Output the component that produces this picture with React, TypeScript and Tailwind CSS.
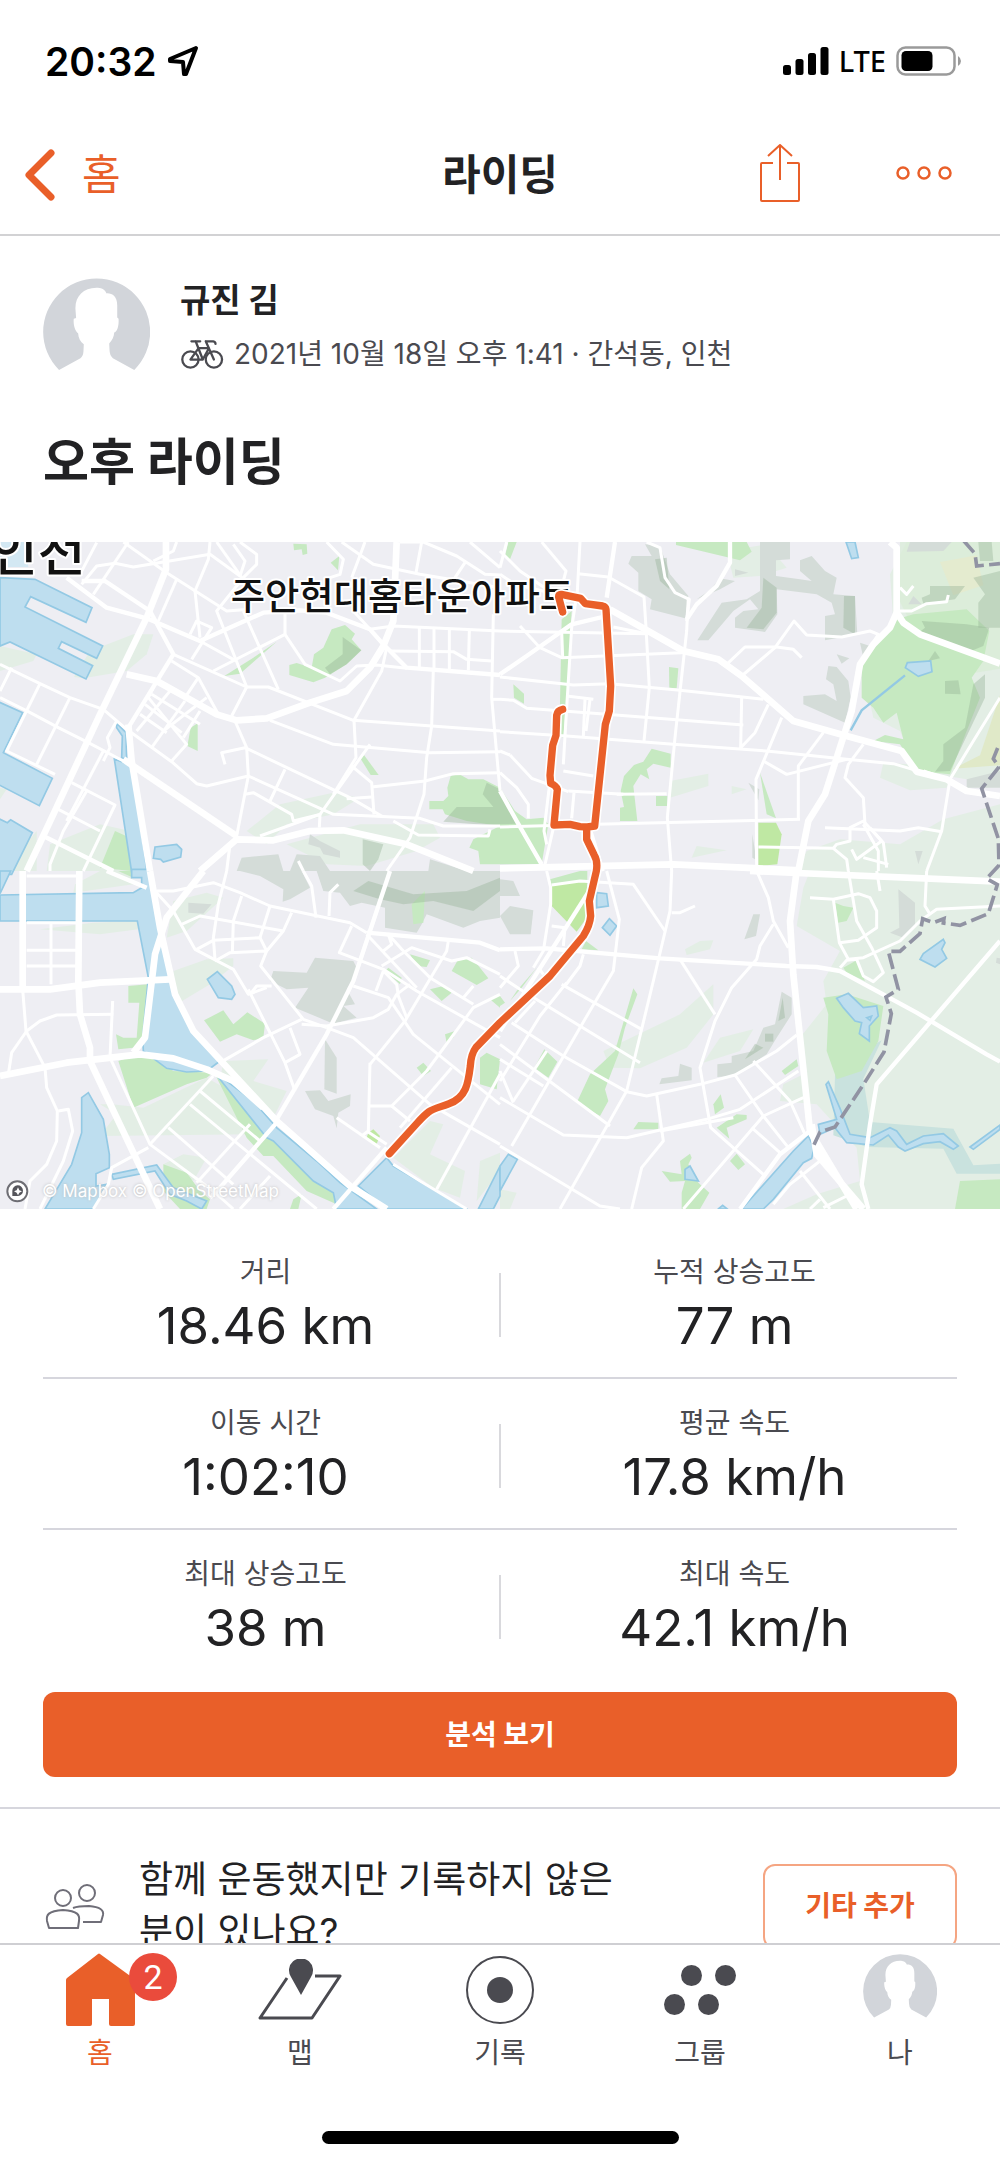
import type { ReactNode } from "react";

const FONT = "font-['Inter','Noto_Sans_CJK_KR',sans-serif]";

/* ---------- Map data: four tiles, each drawn in its own 1500 x 1020 space ---------- */

type Tile = {
  x: number;
  y: number;
  pale: string[];
  green: string[];
  lime?: string[];
  hill: string[];
  deep?: string[];
  water: string[];
  thin: string[];
  mid: string[];
  thick: string[];
};

const TILES: Tile[] = [
  {
    x: 0,
    y: -33,
    pale: [
      "M0 345L110 370 100 390 0 420Z",
      "M270 360L400 310 460 310 440 370 380 420 250 442 222 438Z",
      "M740 900L840 820 1000 785 1080 800 1000 850 860 880 800 940Z",
      "M860 940L1080 880 1300 880 1320 920 1250 960 1100 1005 980 1000Z",
      "M150 940L300 880 390 900 390 1020 140 1020Z",
      "M60 960L110 900 110 1020 40 1020Z",
      "M0 770L20 775 0 805Z",
    ],
    green: [
      "M880 38L920 40 922 68 908 72 905 55 882 58Z",
      "M992 95L1018 75 1014 118Z",
      "M970 350L995 295 1035 282 1065 308 1055 325 1084 358 1040 400 975 440 940 454 868 432 868 402 890 396 935 410 942 370Z",
      "M673 435L760 380 830 332 720 428Z",
      "M562 645L572 590 593 577 593 660Z",
      "M1080 680L1092 672 1136 732 1112 732Z",
      "M1342 770L1352 735 1378 730 1405 745 1450 745 1500 770V885L1400 870 1335 850 1328 835 1288 835V810L1330 810 1345 795Z",
      "M1420 925L1500 885V1000L1440 1000 1435 960 1408 950Z",
      "M300 1010L345 900 378 915 395 1020Z",
    ],
    hill: [
      "M725 980L835 970 850 1020 710 1020Z",
      "M890 970L960 975 990 1020 870 1020Z",
      "M930 910L960 930 1020 960 1020 980 970 970 960 950 925 940Z",
      "M1290 985L1400 1020H1285Z",
    ],
    deep: [
      "M1028 318L1084 358 1040 400 990 430 975 410 1028 370Z",
      "M1460 755L1500 775V885L1330 872 1370 828 1480 828 1448 790Z",
      "M1088 925L1150 940 1135 985 1110 1020 1088 1000Z",
    ],
    water: [
      "M0 140L105 145 276 230 258 274 92 197 75 228 308 345 290 382 185 332 175 352 278 404 258 444 30 333 0 345Z",
      "M-10 510L68 545 10 665 157 742 118 824-10 758Z",
      "M-10 860L22 875 32 866 97 905 35 1030H-10Z",
      "M350 577L378 605 380 685 365 680 367 615 350 590Z",
      "M343 684L398 705 442 1030 396 1030Z",
      "M465 948L530 940 545 955 542 978 490 993 482 985 460 982Z",
    ],
    thin: [
      "M0 400L120 458 210 500 310 535 380 595 515 692 590 758 620 765 745 735 1000 850 1260 862 1330 885 1500 885",
      "M0 500L85 542 175 590 265 635 370 690",
      "M35 410L0 480",
      "M120 458L20 660 165 730",
      "M210 500L110 700",
      "M215 755L345 822 250 1020",
      "M175 835L300 900",
      "M260 780L190 900 150 1000V1020",
      "M310 660L200 870",
      "M350 570L322 620 330 650 310 690",
      "M245 160L290 105 345 97 400 108 630 70 720 135 735 90 700 40",
      "M370 33L500 125 680 240 750 235",
      "M290 35L240 130",
      "M385 33L280 190",
      "M630 33L625 85 585 180 600 320",
      "M720 33L770 70 770 100 730 140 650 240 740 468 695 555",
      "M650 33L740 160",
      "M530 33L520 60 460 90",
      "M530 145L475 270",
      "M570 310L590 270 635 290 575 385",
      "M600 330L705 388",
      "M640 420L855 310V240",
      "M730 240L835 475",
      "M520 370L740 468 805 468 1060 568 1500 600",
      "M855 310L915 400 1020 450 1070 405 1130 402 1220 412",
      "M515 390L595 440 655 550",
      "M470 450L445 500 560 640 515 690",
      "M455 490L600 580",
      "M435 520L545 605",
      "M420 550L500 605",
      "M510 480L410 600",
      "M555 510L455 650",
      "M600 540L550 620",
      "M620 500L490 600",
      "M595 440L555 500",
      "M705 570L740 650 745 735 710 915",
      "M675 700L665 665 735 650 1050 800 1150 858",
      "M810 568L1000 640 1290 665 1500 662",
      "M855 715L810 810",
      "M735 790L760 785 875 850 880 870 960 850 1110 640",
      "M780 915L960 850 958 890",
      "M1160 350L1145 420 1062 568 1068 680 1000 790",
      "M1055 705L1115 755 1122 850",
      "M1115 768L1275 750 1360 728 1500 725",
      "M1040 803L1115 798",
      "M1300 415L1295 585 1280 680 1272 790 1230 920 1160 1020",
      "M1110 295L1180 285 1500 300",
      "M1258 290V415",
      "M1302 292V415",
      "M1348 292V415",
      "M1408 298L1405 418",
      "M1170 360L1360 362 1400 385 1475 390",
      "M980 33L1030 85 1020 130 990 140",
      "M1025 33L1120 100 1260 130 1500 170",
      "M1095 33L1055 140",
      "M1060 240L1110 295",
      "M1265 33L1248 125",
      "M1200 33L1270 33 1370 75 1455 130 1500 132",
      "M1395 95L1365 140",
      "M1410 33L1500 110",
      "M1480 250L1475 500 1500 780",
      "M1475 505H1500",
      "M1180 870L1255 912 1465 915 1470 895",
      "M690 940L680 1020",
      "M895 990L910 1020",
    ],
    mid: [
      "M200 140L320 230 440 262 600 330 790 245 900 238 980 245 1110 295 1150 340 1220 410 1500 432",
      "M245 150H315L450 240 520 370 385 590",
      "M130 915L340 1020",
    ],
    thick: [
      "M498 33V115L440 260 300 550 160 850 80 1020",
      "M380 430L470 450 650 550 710 568 800 562 930 515 1040 480 1110 410 1150 345 1180 270 1190 33",
      "M370 685L710 915",
      "M385 580L395 690 450 1020",
      "M600 1020L710 925 820 928 930 900 1030 898 1220 940 1420 1020",
    ],
  },
  {
    x: 1500,
    y: -33,
    pale: [
      "M510 750L625 728V765L510 800Z",
      "M695 765L740 775 695 790Z",
      "M1220 33H1500V740L1400 745 1250 720 1200 600 1120 560 1090 420 1180 270 1170 130Z",
      "M1150 695L1230 700 1350 750 1340 770 1230 778 1140 740Z",
      "M920 960L1020 925 1200 940 1330 865 1500 820V1020H890Z",
      "M590 945L680 958 575 980Z",
      "M680 60L800 40 860 110 780 135 700 140Z",
    ],
    green: [
      "M25 33H50L30 85 15 75Z",
      "M528 33H740L755 62 720 88 528 42Z",
      "M185 265L215 240 205 440 190 620 178 615Z",
      "M40 460L72 488V518L42 500Z",
      "M507 408L535 412 530 472 508 470Z",
      "M455 653L512 668V710L460 698 440 715 448 745 422 730 400 765 412 870H360V830L372 828 362 780 372 735 402 702 430 692Z",
      "M468 795H502V825H468Z",
      "M0 770L45 840 80 865 130 860 145 880 125 1000H0Z",
      "M1190 265L1240 250 1400 235 1468 300 1450 390 1415 440 1440 500 1400 600 1350 730 1250 720 1200 640 1120 630 1155 612 1210 625 1190 545 1150 575 1120 530 1085 500 1085 400Z",
      "M780 725L828 862 800 850Z",
    ],
    lime: ["M775 875L828 875 845 910 832 1000 775 1005Z"],
    hill: [
      "M435 40L480 45 510 130 565 195 555 262 450 235 455 205 415 180 415 125 385 98 395 75 455 75Z",
      "M780 33H870V85L828 88V135L900 145 935 150 900 120V88L935 75 975 120 1010 140 1000 190 1065 195 1072 310 975 328V255L1005 250 995 215 950 190 830 175 832 250 795 303 705 290 705 260 730 240 775 235 750 205 700 240 625 328H592L665 215 740 205 780 180Z",
      "M985 405L1010 408 1045 450 1052 500 1035 575 910 520 910 495 975 490 1010 510 1000 460 978 445Z",
      "M630 178L660 142 705 150 660 175 590 205Z",
      "M705 115L745 125 705 135Z",
      "M1230 33H1355L1330 60 1220 62Z",
      "M1010 370L1048 382 1025 398Z",
      "M745 755L778 775 775 808Z",
      "M1245 960H1268L1255 1000Z",
      "M1225 220L1240 195 1265 220Z",
      "M1080 335L1110 345 1090 380Z",
      "M757 910L765 960V985L757 980Z",
      "M1400 745L1500 720V770H1400Z",
    ],
    deep: [
      "M0 780L52 870V878L0 880Z",
      "M1290 165H1395L1365 205 1270 218 1265 200 1290 190Z",
      "M1420 140L1500 120V290H1435V215L1455 190Z",
      "M1265 270L1400 280 1468 290 1450 345 1400 365 1250 310 1275 290Z",
      "M1335 450L1375 448 1382 490 1335 488Z",
      "M1420 460L1455 430 1455 500 1350 720 1305 722 1330 690V640L1395 590Z",
      "M1435 33H1475L1480 90H1440Z",
      "M790 140L830 170V245L790 295 740 290 785 230Z",
      "M465 85L500 80 508 175 480 150Z",
      "M1032 195H1065V310L1030 290Z",
      "M1285 390L1305 360 1320 382Z",
    ],
    water: [
      "M1222 395L1292 390 1296 422 1255 436 1216 410Z",
      "M1038 33H1065L1075 80 1055 83Z",
    ],
    thin: [
      "M125 33L198 120 190 150",
      "M240 33L232 180 215 290 200 530 190 700",
      "M235 128L325 138 432 198 438 290 448 470 432 630",
      "M0 60L60 120 170 195",
      "M0 130L45 160 150 185",
      "M20 33L0 110",
      "M60 285L120 350 185 380 545 365",
      "M0 300L440 308",
      "M0 438L220 462 330 458 540 478 790 505",
      "M185 300L188 380",
      "M340 288L440 308",
      "M200 495L280 505",
      "M255 505L250 615",
      "M270 505L258 600",
      "M0 505L40 508 80 532 300 548 730 582",
      "M0 602L200 615 520 640 800 660 1040 685 1180 698 1260 722",
      "M725 500L722 650 765 605 805 520",
      "M845 560L768 745 770 1010",
      "M970 605L895 705V862",
      "M790 690L860 730 1000 695 1040 685",
      "M1090 640L1045 700 1035 740 1090 800 1095 880",
      "M565 200L560 300 525 620 502 860 515 1020",
      "M440 33L480 50 495 140 525 185 568 205 560 270",
      "M680 400L735 348 830 348 880 355 905 380",
      "M725 435L825 350 882 270 920 312 1025 318 1110 300 1135 310 1110 350",
      "M1200 240L1235 240 1280 218 1340 212 1345 192",
      "M1200 170L1220 190 1240 165",
      "M0 888L290 880 900 865",
      "M350 790L500 788",
      "M205 780L370 790",
      "M190 720L280 735",
      "M222 785L215 862",
      "M30 672L95 742 205 782",
      "M0 660L30 672",
      "M0 725L50 770 85 820V862",
      "M165 870L135 1000",
      "M150 750L132 900 140 940",
      "M975 890L1200 900 1255 890 1325 902",
      "M775 948L1000 952 1010 940 1050 930V890L1090 870 1145 930 1070 985 1055 955",
      "M1000 952L1040 985 1045 1020",
      "M1090 880L1135 960V1020",
      "M1110 890L1150 935 1160 1010",
      "M1350 745L1325 900 1280 1020",
      "M1500 500L1420 630 1350 745",
      "M1090 980L1165 1000",
      "M270 890L310 1020",
    ],
    mid: [
      "M0 430L80 375 215 280 320 255",
      "M0 780L50 870 125 1000",
      "M690 33V95L650 165 590 220 560 265",
      "M345 33L320 200",
      "M1270 722L1345 748",
    ],
    thick: [
      "M330 235L550 360 655 385 725 435 880 570 1040 615 1205 660 1250 722 1340 745 1400 780 1500 795",
      "M1170 33L1190 50V245L1210 275 1260 310 1500 398",
      "M1190 245L1170 290 1120 340 1080 400 1055 540 975 790 925 870 895 1020",
      "M0 1012L520 1000 900 1018",
    ],
  },
  {
    x: 0,
    y: 987,
    pale: [
      "M225 40L300 0H390L400 40 220 65Z",
      "M120 175L280 155 410 150 415 175 300 190Z",
      "M520 300L620 265 700 262 700 285 630 340 530 400Z",
      "M520 90L620 65 670 80 560 180 500 200Z",
      "M335 700L430 710 620 620 760 700 760 790 300 795 350 730 300 700Z",
      "M670 570L805 565 760 630 860 660 820 740 660 630Z",
      "M1180 860L1290 750 1330 760 1290 850 1395 900 1380 980 1300 950Z",
      "M1440 870L1500 845V900L1430 990Z",
      "M490 880L550 850 620 860 580 930Z",
    ],
    green: [
      "M385 345L445 340 430 500 400 530 355 535 348 490 370 500 410 500 418 395H385Z",
      "M355 570L400 555 460 560 520 600 640 605 620 620 560 640 400 710Z",
      "M612 448L670 418 700 460 742 424 795 458 790 500 760 508 710 490 660 512Z",
      "M645 610L720 680 805 790 900 860 960 930 1020 965 1010 1000 920 960 820 855 790 855 740 800Z",
      "M490 880L560 905 600 960 630 985 620 1014 540 1014 490 960Z",
      "M1355 300L1375 265 1415 260 1440 290 1465 322 1430 342Z",
      "M1230 250L1290 268 1280 288 1250 285Z",
      "M1290 355L1330 345 1355 365 1325 390Z",
      "M1155 300L1165 290 1205 320 1200 340Z",
      "M1335 490L1365 480 1360 500 1340 515Z",
      "M1250 590L1270 575 1293 600 1270 615Z",
      "M1440 560L1460 545 1500 565 1490 655 1440 640Z",
      "M1470 385L1500 370V410Z",
      "M1235 100L1275 60 1270 155 1240 160Z",
      "M355 0H400V20Z",
      "M880 985L905 970 895 1014H870Z",
    ],
    lime: ["M1105 785L1120 775 1140 795 1130 818 1100 800Z"],
    hill: [
      "M720 0H905L930 50 870 85 848 92 850 55 780 15Z",
      "M950 0H1500V140L1440 150 1390 170 1280 130 1265 160 1250 185 1155 170 1155 110 1085 95 1050 105 1020 65 970 60Z",
      "M945 260L1060 270 1075 300 1040 355 1065 400 1030 405 1070 440 1000 458 885 410 925 350 860 355 810 330 820 300 920 305Z",
      "M975 505L1010 560V668L973 655Z",
      "M915 660L960 658 985 690 1052 670 1050 705 1015 725 1010 772 1000 735 945 715Z",
      "M565 95L635 100 610 128 565 125Z",
    ],
    deep: ["M1060 60L1105 30 1240 70 1400 60 1500 20V60L1420 120 1300 90 1210 100 1140 85Z"],
    water: [
      "M0 0H32L0 68Z",
      "M0 72L400 65 425 50V20H395V-5H445L480 180 510 330 540 395 590 490 660 570 620 600 560 603 500 592 430 540 428 500 445 320 412 150H0Z",
      "M652 302L695 345 705 370 695 385 655 380 622 325Z",
      "M245 680L265 665 310 745 328 850V890L288 908V945L320 940 280 1014H135L215 880 245 785Z",
      "M335 910L470 882 520 950 620 990 605 1014 560 990 510 970 465 900 340 925Z",
      "M640 600L760 690 830 770 950 870 1020 935 1130 1014H1010L1000 965 940 930 820 810 800 800Z",
      "M1075 945L1160 860 1180 885 1400 1014H1160Z",
      "M1500 885L1435 1014H1480L1500 975Z",
    ],
    thin: [
      "M80 15H235",
      "M80 155H235",
      "M80 238H235",
      "M80 285H235",
      "M153 155V340",
      "M68 355L78 480 135 590 140 650 172 720 170 810 140 880 90 930 75 1014",
      "M25 610L35 545 80 480 120 450 170 432 340 430",
      "M338 390L330 560",
      "M175 720L205 715 218 780 190 870 120 1014",
      "M330 560L450 820 640 960 700 1014",
      "M445 830L335 890 325 940 280 1014",
      "M470 60L520 60 640 35 720 65 810 105 1050 155 1100 185",
      "M465 60L520 120 585 235 700 295 745 370 800 350",
      "M545 160L600 135 850 180",
      "M680 0L655 100 640 200 645 265",
      "M725 75L700 150 697 245",
      "M590 235L640 208 780 200 800 240 850 180 875 125",
      "M810 105L780 200",
      "M645 270L690 245 800 240 782 285 910 445 980 470",
      "M750 370L770 345 815 345",
      "M745 355L855 575 885 660",
      "M660 575L790 500 905 445",
      "M870 470L900 550 855 575",
      "M905 460L980 465 1120 440 1165 415 1190 370 1230 340",
      "M910 0L935 45 948 140",
      "M1015 40L990 65 987 135",
      "M1055 165L1018 245 1150 295 1250 360 1500 500",
      "M1100 190L1250 350",
      "M1060 345L1165 380 1240 490 1500 700",
      "M980 470L1060 500 1290 700 1500 820",
      "M1110 575L1105 780 1085 795",
      "M1010 740L1140 830",
      "M1150 300L1128 360",
      "M1145 285L1235 230 1355 270 1400 260 1500 310",
      "M1150 240L1175 220 1165 190 1210 240 1290 320 1420 400",
      "M1345 210L1340 240 1215 450 1110 580",
      "M1150 300L1190 340 1195 375 1220 440",
      "M1500 370L1420 410 1280 600 1175 705 1110 705",
      "M1420 345L1390 380",
      "M1175 705L1230 750",
      "M1355 590L1200 770",
      "M1500 610L1310 955",
      "M1180 880L1260 930 1400 1014",
      "M640 615L450 820",
      "M600 660L780 810",
      "M570 700L950 1014",
      "M505 770L700 940",
      "M750 760L590 935",
      "M810 915L720 1014",
      "M1100 780L1160 820",
    ],
    mid: [
      "M1170 0L1060 330 980 490 830 745",
      "M830 755L660 950 630 980",
      "M1160 830L1000 1014",
      "M320 0L440 50",
      "M1100 185L1440 215 1500 238",
    ],
    thick: [
      "M68 0V350",
      "M238 0L235 330 240 430 270 530 270 570 350 740 480 1014",
      "M0 355H150L300 335 510 325",
      "M450 0L480 170 525 370 580 480 830 750 1050 945 1160 1014",
      "M610 0L500 140 465 250 435 500 400 545",
      "M0 615L200 575 420 550 520 562 620 595 700 630 790 710",
    ],
  },
  {
    x: 1500,
    y: 987,
    pale: [
      "M930 0H1500V1014H850L950 970 1080 930 1070 830 950 700 840 690 850 640 910 610 900 500 980 400 970 330 1020 240 890 165 910 50Z",
      "M310 540L540 430 640 340V430L560 530 420 592 330 590Z",
      "M610 575L660 500 760 475 720 540Z",
      "M555 235L600 210 640 208 630 235 560 252Z",
      "M0 955L50 965 30 1014H0Z",
    ],
    green: [
      "M150 25L240 0H262V40L155 45Z",
      "M400 352L412 370 375 470 355 550 315 655 325 690 300 735 230 695 270 610 345 540Z",
      "M103 590L133 535 172 572 145 620Z",
      "M0 375L15 395 0 405Z",
      "M110 290L65 350 30 390 50 360Z",
      "M970 380L1040 370 1150 405 1135 510 1085 600 1010 625 980 540 985 430Z",
      "M1005 95L1030 105 1060 110 1040 150 1015 155Z",
      "M1030 290L1070 268 1095 330 1040 305Z",
      "M845 600L890 565 895 585 855 612Z",
      "M640 700L662 670 672 710 645 730Z",
      "M650 770L710 730 740 732V745L680 770 688 803Z",
      "M415 753L475 755V775H400Z",
      "M690 870L710 848 735 880 715 897Z",
      "M570 848L575 860 565 880 595 935 628 965 600 1014H545V965L555 930 510 932 485 900 545 910 540 870Z",
      "M1380 930L1500 925V1014H1365Z",
      "M258 210L295 238 245 235Z",
    ],
    lime: ["M155 40L260 30 268 130 230 182 155 105Z"],
    hill: [
      "M0 25L40 30 60 75 0 75Z",
      "M0 135L30 105 100 118 92 190 30 190Z",
      "M760 130H780L768 195 733 205Z",
      "M845 362L875 380V430L830 500 800 550 700 615 652 618V580L695 575V555L760 540 790 470 825 460Z",
      "M540 578L575 590V628L478 640 485 622 535 615Z",
      "M1195 55L1245 95V165L1210 200 1170 185 1198 170Z",
      "M1490 260L1500 262V280L1488 275Z",
    ],
    deep: [
      "M848 380L855 440 835 450Z",
      "M795 488H820V512H795Z",
      "M765 518L790 530 735 565Z",
    ],
    water: [
      "M290 65L320 68 325 105 290 110Z",
      "M328 143L350 165 330 193 307 170Z",
      "M1330 205L1335 215 1325 235 1340 262 1305 288 1260 265 1270 248Z",
      "M1010 382L1045 367 1090 410 1130 405 1135 435 1108 465V510L1078 488 1085 455 1065 450 1030 410Z",
      "M1100 440L1115 435 1110 448Z",
      "M925 795L942 830 935 862 910 875 820 985 790 1014H725L880 840Z",
      "M570 885L595 930 555 925 555 895Z",
      "M25 850L52 865 0 960V885Z",
      "M655 1014L668 1003 682 1014Z",
      "M985 632L1020 712 1050 790 1110 800 1170 770 1190 780 1220 820 1270 795 1330 788 1375 825 1360 835 1320 812 1270 818 1215 840 1195 828 1165 792 1120 822 1040 815 1005 770 960 790 955 760 1010 745 978 640Z",
      "M1410 828L1500 762V775L1420 835Z",
    ],
    thin: [
      "M0 315L60 355 420 575",
      "M0 520L330 765",
      "M0 680L190 792 380 800 620 745 720 715 895 600",
      "M0 825L300 1005 360 1014",
      "M35 455L190 555 380 662 440 675 600 640 705 612 830 540 890 492",
      "M0 565L130 645",
      "M115 290L130 310",
      "M185 340L425 475",
      "M200 335L120 435 0 630",
      "M105 390L45 455",
      "M250 250L240 285 195 345",
      "M45 240L55 285 0 350",
      "M140 0L152 50V100L130 240 100 290",
      "M155 42L240 30 400 40 495 180",
      "M320 0L358 145 340 300 240 470 35 825",
      "M515 0L510 120 460 330 380 660 180 1014",
      "M515 125L540 125 585 105",
      "M155 165L195 170 190 225",
      "M770 0L805 80 820 150 865 230",
      "M820 160L780 225 770 265 695 350 645 450 600 590 632 770 790 910",
      "M540 265L645 430",
      "M470 670L490 810 425 890 395 1014",
      "M705 612L790 735 865 830",
      "M760 570L870 690 915 790",
      "M910 680L790 735 550 1014",
      "M755 770L840 845",
      "M480 780L700 740",
      "M930 80L1000 85 1075 68 1110 80 1130 120 1130 170 1075 208 1020 215",
      "M1000 85L1018 215 1045 265 1090 260 1200 210 1260 150 1310 115 1500 105",
      "M1045 0L1070 150 1115 230 1150 305 1120 332 1090 315 1070 265 1040 268 1020 290",
      "M1280 0L1275 105 1290 130",
      "M1130 0L1140 60",
      "M900 900L990 1014",
      "M820 1000L870 940 960 870",
      "M960 985L930 1014",
      "M970 1010L1040 975",
      "M0 600L40 695",
      "M140 540L40 690",
    ],
    mid: [
      "M0 235L140 232 480 262 860 285 950 288 1020 300 1250 425 1460 550 1500 572",
      "M1500 210L1130 640 1110 760 1085 940 1105 1014",
      "M930 780L840 850 720 1014",
      "M280 40L0 480",
    ],
    thick: [
      "M750 0L1500 32",
      "M890 0L870 150 880 310 930 780 1070 1014",
      "M935 760L950 850 1090 1014",
    ],
  },
];

const BORDER =
  "M2890-5L2925 35 2930 72 3000 65 M2993 618L2980 650 2997 675 2945 740 2995 890 2997 970 2960 1010 2992 1028 2965 1115 2880 1150 2830 1143 2832 1130 2800 1142 2768 1130 2760 1175 2700 1228 2665 1228 2695 1342 2658 1365 2674 1415 2652 1530 2590 1628 2505 1755 2460 1770 2442 1808";

const ROUTE =
  "M1688 210L1676 165Q1675 156 1684 157L1742 169 1756 185 1808 192Q1817 194 1818 202L1832 432 1828 507 1816 547 1784 852 1762 855 1740 854 1710 847 1662 849 1672 742Q1668 730 1652 724L1650 700 1658 610 1668 580 1670 520Q1672 505 1688 502M1760 855V892L1782 938Q1794 958 1789 987L1768 1077 1772 1122Q1770 1150 1750 1182L1650 1302 1500 1442 1428 1516Q1413 1536 1411 1572C1405 1620 1400 1668 1345 1686C1290 1706 1290 1700 1250 1745L1168 1835";

function Layer({ pick, children }: { pick: (t: Tile) => string[] | undefined; children: (d: string) => ReactNode }) {
  return (
    <>
      {TILES.map((t) => (
        <g key={`${t.x}:${t.y}`} transform={`translate(${t.x} ${t.y})`}>
          {(pick(t) ?? []).map((d) => children(d))}
        </g>
      ))}
    </>
  );
}

function RideMap() {
  return (
    <div className="relative">
      <svg viewBox="0 0 3000 2001" className="block h-auto w-full bg-[#eeeef3]" role="img" aria-label="라이딩 경로 지도">
        <Layer pick={(t) => t.pale}>{(d) => <path key={d} d={d} fill="#e3eee5" />}</Layer>
        <path d="M2700 0H3000V380L2880 400 2760 300 2700 180Z" fill="#d9edd6" opacity="0.7" />
        <path d="M2820 60L2930 40 2950 130 2860 160Z" fill="#e4ebcf" />
        <path d="M3000 460L2940 640 2860 680 3000 670Z" fill="#e0e9c8" />
        <path d="M2505 1600L2600 1520 2645 1495 2590 1610 2610 1740 2860 1760 2920 1870 3000 1865V1895L2870 1895 2830 1820 2600 1815 2500 1780Z" fill="#c9e2de" />
        <Layer pick={(t) => t.hill}>{(d) => <path key={d} d={d} fill="#d4dcd8" />}</Layer>
        <Layer pick={(t) => t.green}>{(d) => <path key={d} d={d} fill="#c6e9c1" />}</Layer>
        <Layer pick={(t) => t.lime}>{(d) => <path key={d} d={d} fill="#bfe8a3" />}</Layer>
        <Layer pick={(t) => t.deep}>{(d) => <path key={d} d={d} fill="#94b094" opacity="0.38" />}</Layer>
        <path d="M0 0H75L85 75H0Z" fill="#d3e8f3" />
        <Layer pick={(t) => t.water}>
          {(d) => <path key={d} d={d} fill="#bedeef" stroke="#93c9e4" strokeWidth="5" />}
        </Layer>
        <path d="M2715 400L2585 505 2552 565" fill="none" stroke="#93c9e4" strokeWidth="7" />
        <g fill="none" stroke="#fff" strokeLinejoin="round">
          <g strokeWidth="9">
            <Layer pick={(t) => t.thin}>{(d) => <path key={d} d={d} />}</Layer>
          </g>
          <g strokeWidth="13">
            <Layer pick={(t) => t.mid}>{(d) => <path key={d} d={d} />}</Layer>
          </g>
          <g strokeWidth="20">
            <Layer pick={(t) => t.thick}>{(d) => <path key={d} d={d} />}</Layer>
          </g>
        </g>
        <path d={BORDER} fill="none" stroke="#9193a3" strokeWidth="11" strokeDasharray="48 16" />
        <g className={FONT} fill="#111" stroke="#fff" strokeWidth="12" strokeLinejoin="round" paintOrder="stroke">
          <text x="-30" y="86" fontSize="156" fontWeight="500">
            인천
          </text>
          <text x="692" y="204" fontSize="112" fontWeight="500">
            주안현대홈타운아파트
          </text>
        </g>
        <path d={ROUTE} fill="none" stroke="#fff" strokeWidth="32" strokeLinecap="round" strokeLinejoin="round" />
        <path d={ROUTE} fill="none" stroke="#e95f29" strokeWidth="22" strokeLinecap="round" strokeLinejoin="round" />
        <g transform="translate(52 1948)">
          <circle r="30" fill="#fff" stroke="#6e6e74" strokeWidth="6" />
          <path d="M-15 14V-2A16 16 0 1 1 2 14Z" fill="#55555b" />
          <path d="M2-12L6-3 14 0 6 4 2 12-2 4-10 0-2-3Z" fill="#fff" />
        </g>
      </svg>
      <p className="absolute bottom-1 left-[42px] text-[17px] leading-7 text-white [text-shadow:0_0_3px_#bbb]">
        © Mapbox © OpenStreetMap
      </p>
    </div>
  );
}

/* ---------- Icons ---------- */

function Avatar({ className }: { className: string }) {
  return (
    <svg viewBox="128 770 320 276" className={className} fill="#d2d5da" aria-hidden="true">
      <path d="M176 1045A160 160 0 1 1 401 1045L337 1010Q327 1000 327 985L326 966C336 955 340 945 341 933C352 928 355 910 354 892L350 888V852C350 825 335 815 318 816C312 802 300 799 288 799C248 799 224 825 225 862L227 890L220 892C218 910 224 928 233 935C234 950 240 960 250 968L249 990Q248 1004 240 1010Z" />
    </svg>
  );
}

function BikeIcon() {
  return (
    <svg viewBox="540 962 135 94" className="h-8 w-11" fill="none" stroke="#4a4a50" strokeWidth="7" strokeLinecap="round" strokeLinejoin="round" aria-hidden="true">
      <circle cx="572" cy="1026" r="25" />
      <circle cx="644" cy="1026" r="25" />
      <path d="M575 970H602M588 970L610 1026H572L597 991H629L610 1026M619 970L644 1026M619 970H642Q649 971 649 978" />
    </svg>
  );
}

function PeopleIcon() {
  return (
    <svg viewBox="0 0 60 48" className="h-12 w-15" fill="none" stroke="#6f6e78" strokeWidth="2" strokeLinejoin="round" aria-hidden="true">
      <circle cx="18" cy="16" r="8" />
      <circle cx="42" cy="11" r="8" />
      <path d="M4 46L2 39C1 33 3 29 18 28C33 29 35 33 34 39L33 46ZM28 26C33 24 38 24 44 24C55 25 59 28 58 33L56 40H38" />
    </svg>
  );
}

function ShareIcon() {
  return (
    <svg viewBox="0 0 40 58" className="h-[58px] w-10" fill="none" stroke="currentColor" strokeWidth="2" strokeLinejoin="round" aria-hidden="true">
      <path d="M13 19H2Q1 19 1 20V56Q1 57 2 57H38Q39 57 39 56V20Q39 19 38 19H27M20 36V1M8 12L20 1L32 12" />
    </svg>
  );
}

function HouseIcon() {
  return (
    <svg viewBox="0 0 70 74" className="h-[74px] w-[70px]" fill="#e95f29" aria-hidden="true">
      <path d="M35 1L68 25Q70 26 70 28V71Q70 73 68 73H46Q44 73 44 71V46H27V71Q27 73 25 73H3Q1 73 1 71V27Q1 26 2 25L33 1Q34 0 35 1Z" />
    </svg>
  );
}

function MapIcon() {
  return (
    <svg viewBox="0 0 84 62" className="h-[62px] w-[84px]" aria-hidden="true">
      <path d="M29 19L2 59H54L82 17H57" fill="none" stroke="#4a4a50" strokeWidth="3" strokeLinejoin="round" />
      <path d="M43 36L33 18A12 12 0 1 1 53 18Z" fill="#4a4a50" />
    </svg>
  );
}

function RecordIcon() {
  return (
    <svg viewBox="0 0 70 70" className="size-[70px]" aria-hidden="true">
      <circle cx="35" cy="35" r="33" fill="none" stroke="#4a4a50" strokeWidth="2" />
      <circle cx="35" cy="35" r="13" fill="#4a4a50" />
    </svg>
  );
}

function GroupIcon() {
  return (
    <svg viewBox="0 0 144 100" className="h-[50px] w-[72px]" fill="#4a4a50" aria-hidden="true">
      <circle cx="55" cy="21" r="21" />
      <circle cx="123" cy="21" r="21" />
      <circle cx="21" cy="79" r="21" />
      <circle cx="89" cy="79" r="21" />
    </svg>
  );
}

/* ---------- Page parts ---------- */

function StatusBar() {
  return (
    <div className="flex h-[116px] items-center justify-between pt-1.5 pr-[38px] pl-[45px] text-black">
      <div className="flex items-center gap-2.5">
        <span className="text-[39px] leading-none font-semibold">20:32</span>
        <svg viewBox="0 0 32 32" className="size-8" fill="none" stroke="currentColor" strokeWidth="4" strokeLinejoin="round" aria-hidden="true">
          <path d="M29 3L3 14V16L16 17L17 29H19Z" />
        </svg>
      </div>
      <div className="flex items-center gap-2.5">
        <svg viewBox="0 0 92 56" className="h-7 w-[46px]" fill="currentColor" aria-hidden="true">
          <rect x="0" y="36" width="16" height="20" rx="5" />
          <rect x="25" y="24" width="16" height="32" rx="5" />
          <rect x="50" y="12" width="16" height="44" rx="5" />
          <rect x="75" y="0" width="16" height="56" rx="5" />
        </svg>
        <span className="font-['Noto_Sans',sans-serif] text-[29px] leading-9 font-medium">LTE</span>
        <svg viewBox="0 0 132 60" className="h-[30px] w-[66px]" aria-hidden="true">
          <rect x="3" y="3" width="114" height="54" rx="16" fill="none" stroke="#9a9a9a" strokeWidth="5" />
          <rect x="11" y="10" width="62" height="40" rx="9" fill="#000" />
          <path d="M124 20Q130 24 130 30T124 40Z" fill="#9a9a9a" />
        </svg>
      </div>
    </div>
  );
}

function TitleBar() {
  return (
    <header className="grid h-[120px] grid-cols-[1fr_auto_1fr] items-center border-b-2 border-[#d2d2d4] px-6 text-[#e95f29]">
      <a href="#home" className="flex items-center gap-6 justify-self-start text-[42px] leading-none">
        <svg viewBox="0 0 34 54" className="h-[54px] w-[34px]" fill="none" stroke="currentColor" strokeWidth="7" strokeLinecap="round" strokeLinejoin="round" aria-hidden="true">
          <path d="M27 5L5 27L27 49" />
        </svg>
        홈
      </a>
      <h1 className="text-[42px] leading-none font-bold text-[#222224]">라이딩</h1>
      <div className="flex items-center gap-24 justify-self-end pr-6 pb-1">
        <button type="button" aria-label="공유">
          <ShareIcon />
        </button>
        <button type="button" aria-label="더 보기">
          <svg viewBox="0 0 112 28" className="h-3.5 w-14" fill="none" stroke="currentColor" strokeWidth="5" aria-hidden="true">
            <circle cx="14" cy="14" r="11" />
            <circle cx="56" cy="14" r="11" />
            <circle cx="98" cy="14" r="11" />
          </svg>
        </button>
      </div>
    </header>
  );
}

const STATS = [
  [["거리", "18.46 km"], ["누적 상승고도", "77 m"]],
  [["이동 시간", "1:02:10"], ["평균 속도", "17.8 km/h"]],
  [["최대 상승고도", "38 m"], ["최대 속도", "42.1 km/h"]],
];

function Stats() {
  return (
    <div className="px-[43px] pt-[19px]">
      {STATS.map((row) => (
        <dl
          key={row[0][0]}
          className="relative grid grid-cols-2 gap-x-6 border-b-2 border-[#d6d6dd] pt-[26px] pb-[21px] text-center before:absolute before:top-[45px] before:left-1/2 before:h-16 before:w-0.5 before:-translate-x-1/2 before:bg-[#d9d9dd] last:border-b-0 last:pb-[34px]"
        >
          {row.map(([label, value]) => (
            <div key={label}>
              <dt className="text-[28px] leading-9 text-[#4a4a50]">{label}</dt>
              <dd className="mt-1.5 text-[51px] leading-[60px] text-[#222224]">{value}</dd>
            </div>
          ))}
        </dl>
      ))}
    </div>
  );
}

const TABS = [
  { label: "홈", icon: <HouseIcon />, badge: "2", active: true },
  { label: "맵", icon: <MapIcon /> },
  { label: "기록", icon: <RecordIcon /> },
  { label: "그룹", icon: <GroupIcon /> },
  { label: "나", icon: <Avatar className="mb-2 w-[74px]" /> },
];

function TabBar() {
  return (
    <nav className="shrink-0 border-t-2 border-[#cfcfd3] bg-white">
      <ul className="grid grid-cols-5 pt-2">
        {TABS.map((tab) => (
          <li key={tab.label}>
            <a
              href={`#${tab.label}`}
              aria-current={tab.active ? "page" : undefined}
              className="flex flex-col items-center gap-2 text-[28px] leading-9 text-[#4a4a50] aria-[current=page]:text-[#e95f29]"
            >
              <span className="relative flex h-[74px] items-center">
                {tab.icon}
                {tab.badge && (
                  <span className="absolute top-0 left-16 flex size-12 items-center justify-center rounded-full bg-[#ea4b3c] font-['Roboto',sans-serif] text-[34px] text-white">
                    {tab.badge}
                  </span>
                )}
              </span>
              {tab.label}
            </a>
          </li>
        ))}
      </ul>
      <div className="mx-auto mt-15 mb-[21px] h-[13px] w-[357px] rounded-full bg-black" />
    </nav>
  );
}

export default function App() {
  return (
    <div lang="ko" className={`${FONT} flex h-screen flex-col bg-white`}>
      <StatusBar />
      <TitleBar />
      <main className="min-h-0 flex-1 overflow-y-auto [scrollbar-width:none]">
        <section className="px-[43px] pt-[42px] pb-[50px]">
          <div className="flex items-start gap-[30px]">
            <Avatar className="w-[107px]" />
            <div>
              <p className="text-[33px] leading-11 font-bold text-[#222224]">규진 김</p>
              <p className="mt-2.5 flex items-center gap-2.5 text-[28px] leading-11 text-[#4a4a50]">
                <BikeIcon />
                2021년 10월 18일 오후 1:41 · 간석동, 인천
              </p>
            </div>
          </div>
          <h2 className="mt-14 text-[50px] leading-[60px] font-bold text-[#222224]">오후 라이딩</h2>
        </section>
        <RideMap />
        <Stats />
        <div className="px-[43px] pb-[30px]">
          <button type="button" className="h-[85px] w-full rounded-xl bg-[#e95f29] text-[28px] font-bold text-white">
            분석 보기
          </button>
        </div>
        <section className="flex items-center border-t-2 border-[#d6d6dd] px-[43px] py-[45px]">
          <div className="flex items-center gap-[34px] pl-0.5">
            <PeopleIcon />
            <p className="w-[500px] text-[37px] leading-[52px] text-[#222224]">함께 운동했지만 기록하지 않은 분이 있나요?</p>
          </div>
          <button type="button" className="ml-auto h-[85px] w-[194px] rounded-xl border-2 border-[#f5a582] text-[28px] font-bold text-[#e95f29]">
            기타 추가
          </button>
        </section>
      </main>
      <TabBar />
    </div>
  );
}
